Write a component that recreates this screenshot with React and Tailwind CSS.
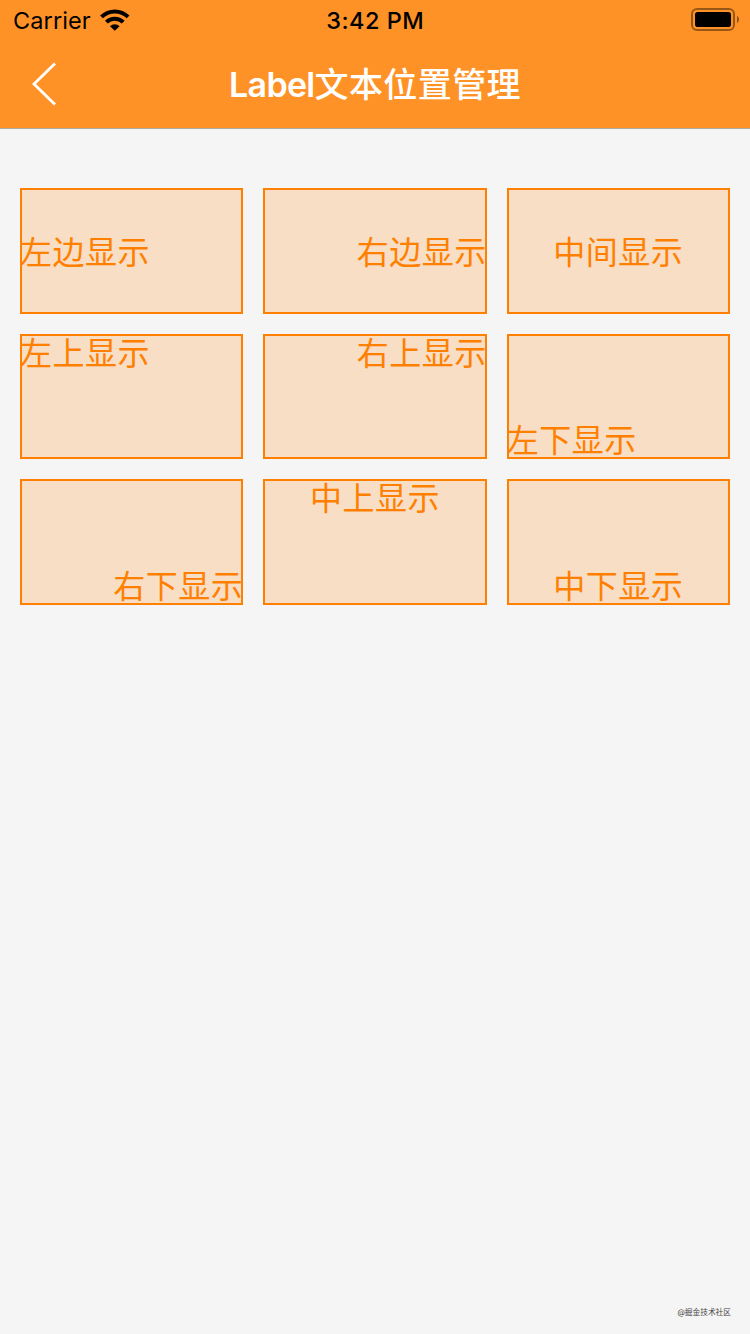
import clsx from 'clsx'

const labels = [
  { text: '左边显示', place: 'items-center justify-start pt-0.5' },
  { text: '右边显示', place: 'items-center justify-end pt-0.5' },
  { text: '中间显示', place: 'items-center justify-center pt-0.5' },
  { text: '左上显示', place: 'items-start justify-start' },
  { text: '右上显示', place: 'items-start justify-end' },
  { text: '左下显示', place: 'items-end justify-start' },
  { text: '右下显示', place: 'items-end justify-end' },
  { text: '中上显示', place: 'items-start justify-center' },
  { text: '中下显示', place: 'items-end justify-center' },
]

function WifiIcon() {
  return (
    <svg className="-mt-0.5" width="30" height="22" viewBox="0 0 30 22" fill="none" stroke="#000" strokeWidth="4">
      <path d="M1.5 7.9 A19 19 0 0 1 28.1 7.9" />
      <path d="M6.4 13.1 A11.9 11.9 0 0 1 23.2 13.1" />
      <path d="M14.8 21.8 L10 17.2 A6.8 6.8 0 0 1 19.6 17.2 Z" fill="#000" stroke="none" />
    </svg>
  )
}

function BatteryIcon() {
  return (
    <svg className="-mt-0.5" width="48" height="24" viewBox="0 0 48 24">
      <rect x="1" y="1" width="42" height="21" rx="5" fill="none" stroke="#000" strokeOpacity="0.4" strokeWidth="2" />
      <rect x="4" y="4" width="36" height="15" rx="2.8" fill="#000" />
      <path d="M46 8 C48.6 9.2 48.6 13.8 46 15 Z" fill="#000" fillOpacity="0.45" />
    </svg>
  )
}

function StatusBar() {
  return (
    <div className="grid grid-cols-3 h-10 pl-[13px] pr-[11px] text-black text-[23.5px] leading-[42px]">
      <div className="flex items-center gap-[9px]">
        <span className="tracking-[0.1px]">Carrier</span>
        <WifiIcon />
      </div>
      <div className="pr-[1.5px] text-center font-medium tracking-[0.5px]">3:42 PM</div>
      <div className="flex items-center justify-end">
        <BatteryIcon />
      </div>
    </div>
  )
}

function NavBar() {
  return (
    <div className="grid grid-cols-[80px_1fr_80px] items-center h-[88px] text-white">
      <button className="pl-[31px]">
        <svg width="26" height="46" viewBox="0 0 26 46" fill="none" stroke="currentColor" strokeWidth="2.8">
          <path d="M24 2.5 L3 23 L24 43.5" />
        </svg>
      </button>
      <h1 className="text-center text-[34px] font-semibold tracking-[-0.7px] whitespace-nowrap">
        Label<span className="font-medium tracking-[0.4px]">文本位置管理</span>
      </h1>
    </div>
  )
}

export default function App() {
  return (
    <div className="flex flex-col h-[1334px] w-[750px] overflow-hidden bg-[#f5f5f5] font-[Inter,'Noto_Sans_CJK_SC',sans-serif]">
      <header className="bg-[#ff9226] border-b border-[#b0aaa5]">
        <StatusBar />
        <NavBar />
      </header>

      <main className="grid grid-cols-3 auto-rows-[125.6px] gap-5 px-5 pt-[59px] flex-1">
        {labels.map(({ text, place }) => (
          <div
            key={text}
            className={clsx('flex bg-[#f8dec5] outline-2 -outline-offset-2 outline-[#ff8000] text-[#ff8000]', place)}
          >
            <span className="pt-px -mb-px text-[32px] leading-[38px] tracking-[0.5px]">{text}</span>
          </div>
        ))}
      </main>

      <footer className="flex justify-end pr-[19px] pb-4 text-[7.7px] leading-[10px] text-[#444]">
        @掘金技术社区
      </footer>
    </div>
  )
}
